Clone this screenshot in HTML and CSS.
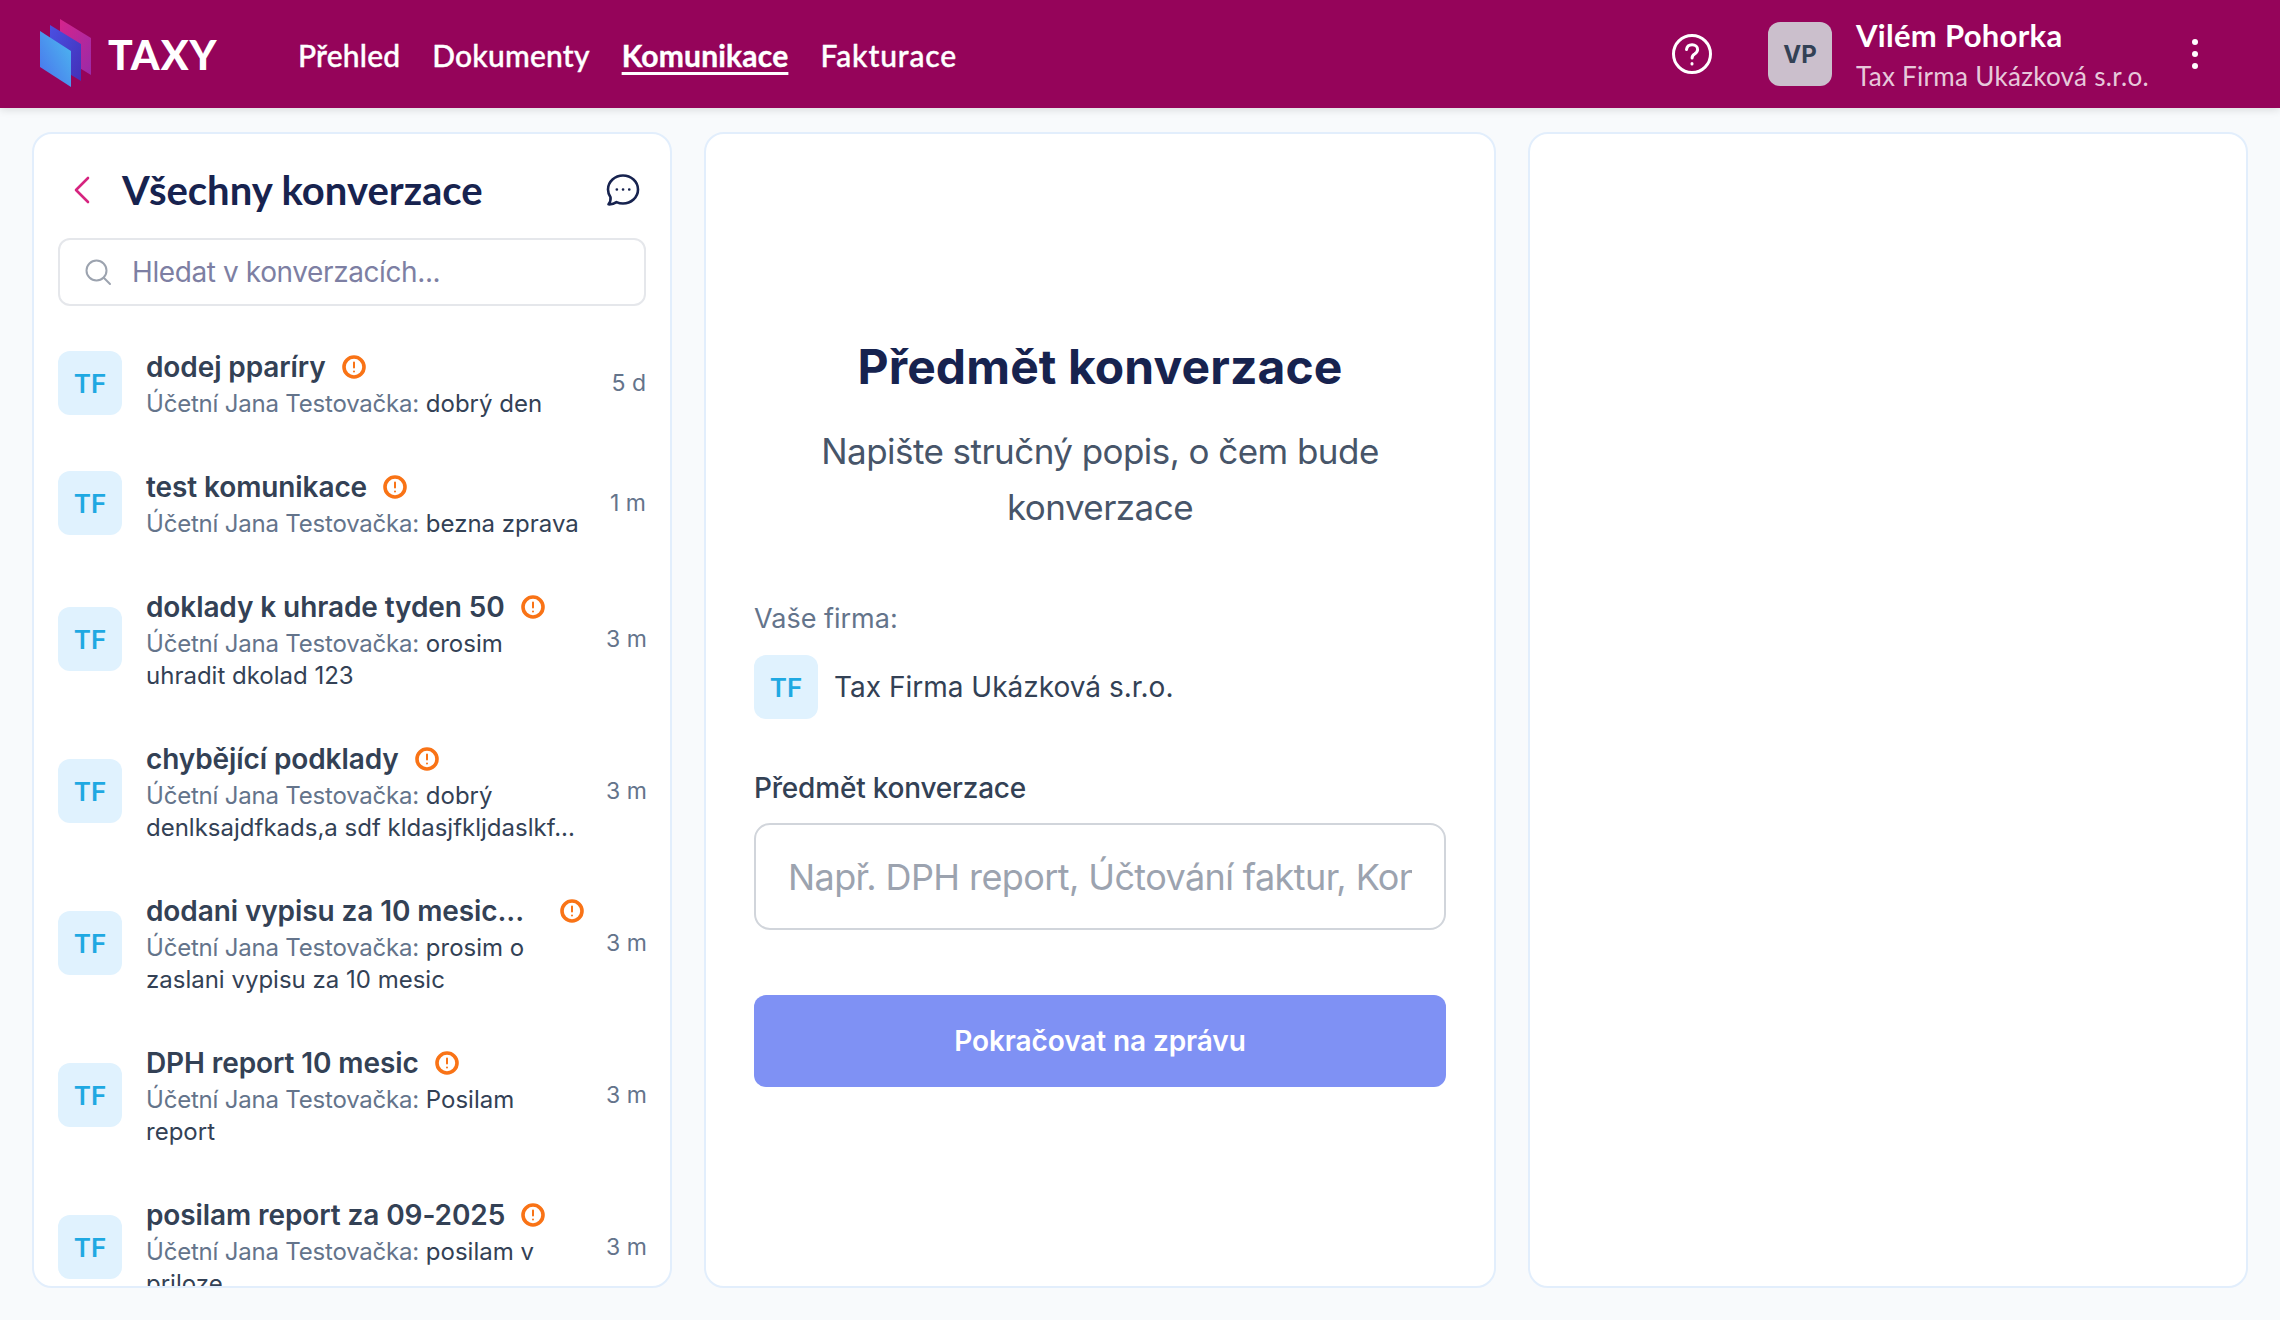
FILE: index.html
```html
<!DOCTYPE html>
<html lang="cs">
<head>
    <meta charset="UTF-8">
    <title>Taxy - Komunikace</title>
    <link rel="stylesheet" href="styles.css">
</head>
<body>
    <!-- Top bar -->
    <header class="topbar">
        <div class="brand">
            <svg class="brand-mark" width="54" height="70" viewBox="0 0 54 70">
                <defs>
                    <linearGradient id="markPink" x1="0" y1="0" x2="1" y2="1">
                        <stop offset="0" stop-color="#d6248c"/>
                        <stop offset="1" stop-color="#9a2aa8"/>
                    </linearGradient>
                    <linearGradient id="markBlue" x1="0" y1="0" x2="1" y2="1">
                        <stop offset="0" stop-color="#4a50e2"/>
                        <stop offset="1" stop-color="#4330b8"/>
                    </linearGradient>
                    <linearGradient id="markCyan" x1="1" y1="0" x2="0" y2="1">
                        <stop offset="0" stop-color="#4cbcf0"/>
                        <stop offset="1" stop-color="#4a70ec"/>
                    </linearGradient>
                </defs>
                <polygon points="20,0 51,19 51,56 20,37" fill="url(#markPink)"/>
                <polygon points="10,6 41,25 41,62 10,43" fill="url(#markBlue)"/>
                <polygon points="0,12 31,32 31,68 0,48" fill="url(#markCyan)"/>
            </svg>
            <span class="brand-name">TAXY</span>
        </div>
        <nav class="nav">
            <a class="nav-link">Přehled</a>
            <a class="nav-link">Dokumenty</a>
            <a class="nav-link active">Komunikace</a>
            <a class="nav-link">Fakturace</a>
        </nav>
        <div class="topbar-right">
            <svg class="help-icon" width="42" height="42" viewBox="0 0 42 42" fill="none" stroke="#fff" stroke-width="3" stroke-linecap="round">
                <circle cx="21" cy="21" r="18.5"/>
                <path d="M15.5 16.5c.4-3 2.6-4.8 5.6-4.8 3.2 0 5.5 2 5.5 4.8 0 2.2-1.2 3.3-3 4.500-1.600 1-2.500 2-2.500 4"/>
                <path d="M21 30.500v.5"/>
            </svg>
            <div class="user-avatar">VP</div>
            <div class="user-info">
                <div class="user-name">Vilém Pohorka</div>
                <div class="user-company">Tax Firma Ukázková s.r.o.</div>
            </div>
            <div class="kebab"><span></span><span></span><span></span></div>
        </div>
    </header>

    <main class="content">
        <!-- Conversations -->
        <section class="card sidebar">
            <div class="sidebar-head">
                <svg class="back-icon" width="18" height="28" viewBox="0 0 18 28" fill="none" stroke="#d6247f" stroke-width="2.600" stroke-linecap="round" stroke-linejoin="round">
                    <path d="M15 2 3 14l12 12"/>
                </svg>
                <h2>Všechny konverzace</h2>
                <svg class="chat-icon" width="34" height="34" viewBox="0 0 34 34" fill="none" stroke="#17234f" stroke-width="2.600" stroke-linecap="round" stroke-linejoin="round">
                    <path d="M17 2.500C9 2.500 2 8.500 2 16.500c0 3 1 5.600 2.500 7.800.4 2.500-.4 5-2 7 3 .2 5.800-.6 8-2.200 2 .9 4.200 1.400 6.500 1.400 8 0 15-6 15-14S25 2.500 17 2.500Z"/>
                    <path d="M10.800 16.500h.1M17 16.500h.1M23.200 16.500h.1"/>
                </svg>
            </div>
            <div class="search">
                <svg width="28" height="28" viewBox="0 0 28 28" fill="none" stroke="#9ca3af" stroke-width="2" stroke-linecap="round">
                    <circle cx="12.500" cy="12.500" r="10"/>
                    <path d="m20 20 6 6"/>
                </svg>
                <input type="text" placeholder="Hledat v konverzacích...">
            </div>
            <div class="list">
                <div class="item">
                    <div class="avatar">TF</div>
                    <div class="item-body">
                        <div class="item-title"><span>dodej pparíry</span><svg class="alert" viewBox="0 0 24 24"><circle cx="12" cy="12" r="10"/><path class="alert-mark" d="M12 7.500v5M12 16.500v.1"/></svg></div>
                        <p class="item-text"><span>Účetní Jana Testovačka:</span> dobrý den</p>
                    </div>
                    <div class="item-time">5 d</div>
                </div>
                <div class="item">
                    <div class="avatar">TF</div>
                    <div class="item-body">
                        <div class="item-title"><span>test komunikace</span><svg class="alert" viewBox="0 0 24 24"><circle cx="12" cy="12" r="10"/><path class="alert-mark" d="M12 7.500v5M12 16.500v.1"/></svg></div>
                        <p class="item-text"><span>Účetní Jana Testovačka:</span> bezna zprava</p>
                    </div>
                    <div class="item-time">1 m</div>
                </div>
                <div class="item">
                    <div class="avatar">TF</div>
                    <div class="item-body">
                        <div class="item-title"><span>doklady k uhrade tyden 50</span><svg class="alert" viewBox="0 0 24 24"><circle cx="12" cy="12" r="10"/><path class="alert-mark" d="M12 7.500v5M12 16.500v.1"/></svg></div>
                        <p class="item-text"><span>Účetní Jana Testovačka:</span> orosim uhradit dkolad 123</p>
                    </div>
                    <div class="item-time">3 m</div>
                </div>
                <div class="item">
                    <div class="avatar">TF</div>
                    <div class="item-body">
                        <div class="item-title"><span>chybějící podklady</span><svg class="alert" viewBox="0 0 24 24"><circle cx="12" cy="12" r="10"/><path class="alert-mark" d="M12 7.500v5M12 16.500v.1"/></svg></div>
                        <p class="item-text"><span>Účetní Jana Testovačka:</span> dobrý denlksajdfkads,a sdf kldasjfkljdaslkf...</p>
                    </div>
                    <div class="item-time">3 m</div>
                </div>
                <div class="item">
                    <div class="avatar">TF</div>
                    <div class="item-body">
                        <div class="item-title"><span>dodani vypisu za 10 mesic...</span><svg class="alert alert-far" viewBox="0 0 24 24"><circle cx="12" cy="12" r="10"/><path class="alert-mark" d="M12 7.500v5M12 16.500v.1"/></svg></div>
                        <p class="item-text"><span>Účetní Jana Testovačka:</span> prosim o zaslani vypisu za 10 mesic</p>
                    </div>
                    <div class="item-time">3 m</div>
                </div>
                <div class="item">
                    <div class="avatar">TF</div>
                    <div class="item-body">
                        <div class="item-title"><span>DPH report 10 mesic</span><svg class="alert" viewBox="0 0 24 24"><circle cx="12" cy="12" r="10"/><path class="alert-mark" d="M12 7.500v5M12 16.500v.1"/></svg></div>
                        <p class="item-text"><span>Účetní Jana Testovačka:</span> Posilam report</p>
                    </div>
                    <div class="item-time">3 m</div>
                </div>
                <div class="item">
                    <div class="avatar">TF</div>
                    <div class="item-body">
                        <div class="item-title"><span>posilam report za 09-2025</span><svg class="alert" viewBox="0 0 24 24"><circle cx="12" cy="12" r="10"/><path class="alert-mark" d="M12 7.500v5M12 16.500v.1"/></svg></div>
                        <p class="item-text"><span>Účetní Jana Testovačka:</span> posilam v priloze</p>
                    </div>
                    <div class="item-time">3 m</div>
                </div>
            </div>
        </section>

        <!-- New conversation form -->
        <section class="card form-card">
            <h1>Předmět konverzace</h1>
            <p class="form-lead">Napište stručný popis, o čem bude konverzace</p>
            <div class="form-label">Vaše firma:</div>
            <div class="company">
                <div class="avatar">TF</div>
                <span>Tax Firma Ukázková s.r.o.</span>
            </div>
            <label class="field-label">Předmět konverzace</label>
            <input class="field" type="text" placeholder="Např. DPH report, Účtování faktur, Konzultace">
            <button class="submit">Pokračovat na zprávu</button>
        </section>

        <section class="card"></section>
    </main>
</body>
</html>
```

FILE: styles.css
```css
* {
    margin: 0;
    padding: 0;
    box-sizing: border-box;
}

html,
body {
    height: 100%;
}

body {
    font-family: Inter, "Liberation Sans", sans-serif;
    background: #f8fafc;
    display: flex;
    flex-direction: column;
    overflow: hidden;
    color: #334155;
}

/* Top bar */
.topbar {
    height: 108px;
    flex-shrink: 0;
    background: #95045a;
    display: flex;
    align-items: center;
    padding: 0 38px 0 40px;
    box-shadow: 0 2px 8px rgba(0, 0, 0, 0.12);
    position: relative;
    z-index: 2;
}

.brand {
    display: flex;
    align-items: center;
    gap: 14px;
    width: 258px;
}

.brand-mark {
    flex-shrink: 0;
}

.brand-name {
    font-family: Lato, sans-serif;
    font-size: 41px;
    font-weight: 900;
    color: #fff;
    letter-spacing: 1px;
}

.nav {
    display: flex;
    gap: 32px;
    margin-top: 2px;
}

.nav-link {
    font-family: Lato, sans-serif;
    font-size: 30px;
    font-weight: 500;
    letter-spacing: 0.2px;
    color: #fff;
    -webkit-text-stroke: 0.4px #fff;
}

.nav-link.active {
    font-weight: 700;
    text-decoration: underline;
    text-underline-offset: 5px;
    text-decoration-thickness: 3px;
}

.nav-link:last-child {
    letter-spacing: 0.9px;
}

.topbar-right {
    margin-left: auto;
    display: flex;
    align-items: center;
}

.help-icon {
    margin-right: 55px;
}

.user-avatar {
    width: 64px;
    height: 64px;
    border-radius: 12px;
    background: #cbbfcc;
    color: #334155;
    font-size: 24px;
    font-weight: 700;
    display: flex;
    align-items: center;
    justify-content: center;
    margin-right: 24px;
}

.user-info {
    width: 292px;
    padding-top: 3px;
    white-space: nowrap;
}

.user-name {
    font-family: Lato, sans-serif;
    font-size: 31px;
    font-weight: 700;
    letter-spacing: 0.3px;
    line-height: 38px;
    color: #fff;
}

.user-company {
    font-family: Lato, sans-serif;
    font-size: 26px;
    letter-spacing: 0.3px;
    line-height: 38px;
    margin-top: 3px;
    color: rgba(255, 255, 255, 0.8);
}

.kebab {
    display: flex;
    flex-direction: column;
    gap: 6px;
    margin-left: 44px;
    margin-right: 44px;
}

.kebab span {
    width: 6px;
    height: 6px;
    border-radius: 50%;
    background: #fff;
}

/* Columns */
.content {
    flex: 1;
    min-height: 0;
    display: grid;
    grid-template-columns: 640px 792px 720px;
    gap: 32px;
    padding: 24px 32px 32px;
}

.card {
    background: #fff;
    border: 2px solid #e2eefc;
    border-radius: 20px;
    overflow: hidden;
    min-height: 0;
}

/* Sidebar */
.sidebar {
    display: flex;
    flex-direction: column;
    padding: 24px 24px 0;
}

.sidebar-head {
    height: 64px;
    display: flex;
    align-items: center;
    flex-shrink: 0;
    padding: 0 6px 0 15px;
}

.back-icon {
    flex-shrink: 0;
}

.sidebar-head h2 {
    font-family: Lato, sans-serif;
    font-size: 40px;
    font-weight: 700;
    color: #17234f;
    margin-left: 31px;
}

.chat-icon {
    margin-left: auto;
}

.search {
    height: 68px;
    margin-top: 16px;
    flex-shrink: 0;
    border: 2px solid #e5e7eb;
    border-radius: 12px;
    display: flex;
    align-items: center;
    gap: 20px;
    padding: 0 24px;
}

.search input {
    flex: 1;
    border: none;
    outline: none;
    background: none;
    font-family: inherit;
    font-size: 28px;
    letter-spacing: -0.4px;
}

.search input::placeholder {
    color: #7d7fa3;
    opacity: 1;
}

.list {
    margin-top: 16px;
}

.item {
    display: flex;
    align-items: center;
    padding: 24px 0 22px;
}

.avatar {
    width: 64px;
    height: 64px;
    flex-shrink: 0;
    border-radius: 12px;
    background: #e0f2fe;
    color: #1fa9e2;
    font-size: 26px;
    font-weight: 600;
    display: flex;
    align-items: center;
    justify-content: center;
}

.item-body {
    flex: 1;
    min-width: 0;
    margin-left: 24px;
}

.item-title {
    display: flex;
    align-items: center;
    gap: 16px;
    height: 41px;
}

.item-title span {
    font-size: 28px;
    font-weight: 600;
    letter-spacing: -0.1px;
    color: #334155;
    white-space: nowrap;
}

.alert {
    width: 24px;
    height: 24px;
    flex-shrink: 0;
    fill: none;
    stroke: #f97316;
    stroke-width: 3.600;
    stroke-linecap: round;
}

.alert-far {
    margin-left: 20px;
}

.alert-mark {
    stroke-width: 2;
}

.item-text {
    margin-top: 1px;
    font-size: 24px;
    line-height: 32px;
    color: #334155;
}

.item-text span {
    letter-spacing: -0.2px;
    color: #64748b;
}

.item-time {
    width: 40px;
    margin-left: 23px;
    flex-shrink: 0;
    text-align: right;
    white-space: nowrap;
    font-size: 23px;
    color: #64748b;
}

/* Form */
.form-card {
    padding: 0 48px;
    display: flex;
    flex-direction: column;
}

.form-card h1 {
    margin-top: 203px;
    text-align: center;
    font-size: 48px;
    letter-spacing: 0.1px;
    line-height: 60px;
    font-weight: 700;
    color: #17234f;
}

.form-lead {
    margin-top: 26px;
    padding: 0 48px;
    text-align: center;
    font-size: 35px;
    letter-spacing: -0.55px;
    line-height: 56px;
    color: #475569;
}

.form-label {
    margin-top: 66px;
    font-size: 27px;
    line-height: 36px;
    color: #64748b;
}

.company {
    display: flex;
    align-items: center;
    gap: 16px;
    margin-top: 18px;
    font-size: 28px;
    color: #334155;
}

.field-label {
    margin-top: 51px;
    font-size: 28px;
    letter-spacing: -0.2px;
    line-height: 36px;
    font-weight: 500;
    color: #334155;
}

.field {
    height: 107px;
    margin-top: 17px;
    padding: 0 32px;
    border: 2px solid #d1d5db;
    border-radius: 16px;
    outline: none;
    font-family: inherit;
    font-size: 36px;
    letter-spacing: -0.6px;
}

.field::placeholder {
    color: #9ca3af;
    opacity: 1;
}

.submit {
    height: 92px;
    margin-top: 65px;
    border: none;
    border-radius: 12px;
    background: #7f91f4;
    color: #fff;
    font-family: inherit;
    font-size: 28px;
    font-weight: 600;
    letter-spacing: -0.1px;
}
```
